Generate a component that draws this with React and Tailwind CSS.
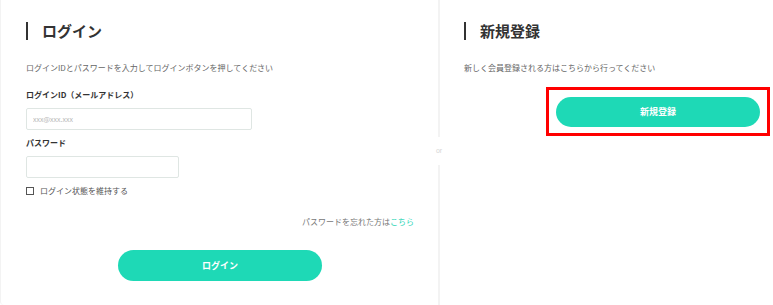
import React from 'react';

const jp = { fontFamily: '"Noto Sans CJK JP", "Noto Sans", sans-serif' };

const Heading = ({ children }) => (
  <div className="mt-[22px] flex h-[18px] items-center">
    <span className="h-[18px] w-[2px] bg-[#333]"></span>
    <h2 className="ml-[14px] text-[15px] font-bold leading-[18px] text-[#333]">{children}</h2>
  </div>
);

const App = () => {
  return (
    <div className="flex h-[305px] w-[773px] bg-white" style={jp}>
      {/* ログイン */}
      <div className="w-[438px] shrink-0 rounded-bl-[4px] border-l border-[#f3f3f3] pl-[25px] pr-[24px]">
        <Heading>ログイン</Heading>
        <p className="mt-[22px] text-[8px] leading-[12px] text-[#666]">
          ログインIDとパスワードを入力してログインボタンを押してください
        </p>
        <label className="mt-[15px] block text-[8px] font-bold leading-[12px] text-[#333]">
          ログインID（メールアドレス）
        </label>
        <input
          type="text"
          placeholder="xxx@xxx.xxx"
          className="mt-[7px] block h-[22px] w-[226px] rounded-[2px] border border-[#dfe6e3] px-[6px] text-[7px] text-[#333] placeholder:text-[#b5b5b5] focus:outline-none"
        />
        <label className="mt-[7px] block text-[8px] font-bold leading-[12px] text-[#333]">パスワード</label>
        <input
          type="password"
          className="mt-[7px] block h-[22px] w-[153px] rounded-[2px] border border-[#dfe6e3] px-[6px] text-[8px] focus:outline-none"
        />
        <label className="mt-[7px] flex h-[12px] items-center text-[8px] text-[#555]">
          <span className="mr-[6px] block h-[8px] w-[8px] border border-[#555]"></span>
          ログイン状態を維持する
        </label>
        <p className="mt-[19px] text-right text-[8px] leading-[12px] text-[#777]">
          パスワードを忘れた方は<a href="#" className="text-[#2ed5b6]">こちら</a>
        </p>
        <div className="mt-[22px] flex justify-center">
          <button className="h-[31px] w-[204px] rounded-full bg-[#1ed9b6] text-[9px] font-bold text-white">
            ログイン
          </button>
        </div>
      </div>

      {/* 区切り */}
      <div className="flex w-[2px] shrink-0 flex-col items-center">
        <div className="h-[137px] w-[2px] bg-[#f3f3f3]"></div>
        <div className="flex h-[28px] items-center text-[7px] text-[#d5d5d5]" style={{ fontFamily: '"Liberation Sans", sans-serif' }}>
          or
        </div>
        <div className="w-[2px] flex-1 bg-[#f3f3f3]"></div>
      </div>

      {/* 新規登録 */}
      <div className="flex-1 pl-[24px]">
        <Heading>新規登録</Heading>
        <p className="mt-[22px] text-[8px] leading-[12px] text-[#666]">
          新しく会員登録される方はこちらから行ってください
        </p>
        <div className="ml-[82px] mt-[13px] w-fit border-[3px] border-[#f00] px-[7px] py-[6px]">
          <button className="h-[30px] w-[204px] rounded-full bg-[#1ed9b6] text-[9px] font-bold text-white">
            新規登録
          </button>
        </div>
      </div>
    </div>
  );
};

export default App;
